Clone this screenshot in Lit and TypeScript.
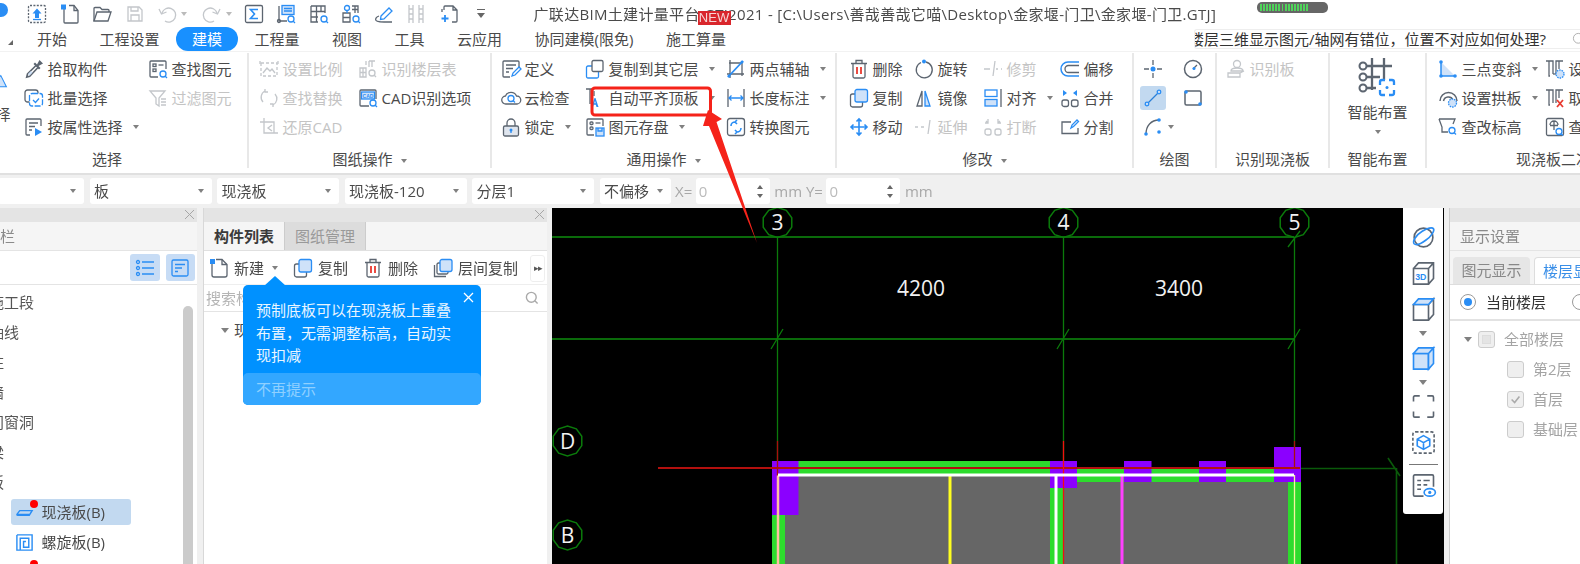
import { LitElement, html, css, svg, nothing } from "lit";
import { customElement } from "lit/decorators.js";

const I: Record<string, unknown> = {
  upload: svg`<rect x="1.5" y="1.5" width="17" height="17" rx="1.5" stroke-dasharray="2 1.4"/><path class="fb" d="M10 4.5l4.5 5H12v4.5H8V9.5H5.5z"/><path class="b" d="M6 15.5h8"/>`,
  newfile: svg`<path d="M4 3.5V18a1 1 0 001 1h12a1 1 0 001-1V6.500L14 1.500H9"/><path d="M14 1.500v5h4"/><rect class="fb" x="1" y="0.500" width="5" height="5"/>`,
  open: svg`<path d="M2 17V4.500a1 1 0 011-1h5l2 2h6a1 1 0 011 1V8"/><path d="M2 17l3-9h14l-3 9z"/>`,
  save: svg`<path d="M3 3h11l3 3v11H3z"/><path d="M6 3v4h7V3M6 17v-6h8v6"/>`,
  undo: svg`<path d="M5 9a7 7 0 1 1 3 8"/><path d="M2 5l2.500 5 5-2"/>`,
  redo: svg`<path d="M15 9a7 7 0 1 0-3 8"/><path d="M18 5l-2.500 5-5-2"/>`,
  sigma: svg`<rect x="1.500" y="1.500" width="17" height="17" rx="1.500"/><path class="b" stroke-width="1.600" d="M14 5.500H6.500l4 4.500-4 4.500H14"/>`,
  qty1: svg`<path d="M3 2v15h8"/><circle cx="3" cy="17" r="1.500"/><rect class="lb" x="6" y="1.500" width="12" height="9"/><path class="b" d="M8 4.500h8M8 7h8"/><circle class="b" cx="15" cy="15" r="3"/><path class="b" d="M17 17l2 2"/>`,
  qty2: svg`<path d="M2 2h14v7M2 2v16h7M2 7.500h14M2 13h7M7.500 2v16M12 2v6"/><circle class="b" cx="15" cy="15" r="3"/><path class="b" d="M17 17l2 2"/>`,
  qty3: svg`<path d="M11 2h6v7M2 9h7v9H2zM2 13.500h7M11 5.500h6M14 2v7"/><circle class="b" cx="6" cy="4" r="2.500"/><path class="b" d="M6 7v2"/><circle class="b" cx="15" cy="15" r="3"/><path class="b" d="M17 17l2 2"/>`,
  pen: svg`<path class="b" d="M7 12l8-8 3 3-8 8-3.500.5z"/><path d="M5 12c-3 1-4 3-3 4.500S6 18 18 18"/>`,
  ladder: svg`<path d="M3 1v18M7 1v18M13 1v18M17 1v18M3 5h4M3 10h4M3 15h4M13 5h4M13 10h4M13 15h4"/>`,
  crop: svg`<path d="M5 6V3a1 1 0 011-1h8l4 4v11a1 1 0 01-1 1h-4M8 2M14 2v4h4"/><path stroke-dasharray="3 2" d="M3 5v5"/><path class="b" stroke-width="1.800" d="M6 11v7M2.500 14.500h7"/>`,
  pick: svg`<path stroke-width="1.600" d="M12 6.500l-8.500 8.500-.8 3 3-.8L14 8.500"/><path class="fg" d="M11 3.500l2 2L15.500 1 19 4.500 14.500 7l2 2-1.500 1.500-5.500-5.500z"/><path class="lbn" d="M4 15l3-3 1.500 1.500-3 3z"/>`,
  batch: svg`<rect x="1" y="2" width="13" height="12" rx="2.500"/><rect class="lbw" x="5.500" y="5.500" width="13" height="12.500" rx="2.500" stroke-dasharray="6 1.500"/><path class="b" d="M9 12l2.500 2.500 3.500-4"/>`,
  attr: svg`<path d="M6 18H3a1 1 0 01-1-1V3a1 1 0 011-1h13a1 1 0 011 1v6"/><path d="M5 6h9M5 9.500h6M5 13h3"/><path class="fb" d="M11 11l7 4-7 4z"/>`,
  find: svg`<path d="M10 18H3a1 1 0 01-1-1V3a1 1 0 011-1h14a1 1 0 011 1v7"/><rect x="5" y="5" width="3" height="2.500"/><rect x="5" y="10" width="3" height="2.500"/><path d="M10.500 6h5"/><circle class="b" cx="15" cy="15" r="3"/><path class="b" d="M17 17l2 2"/>`,
  filter: svg`<path d="M2 3h15l-6 7v8l-3-2v-6z"/><path d="M13 11h5M13 14h5M13 17h5"/>`,
  scale: svg`<rect x="2" y="4" width="16" height="13" stroke-dasharray="3 2"/><path d="M1 2v3M19 2v3M4 14l4-5 3 3 2-2 3 4"/>`,
  floor: svg`<path d="M2 9h6v9H2zM2 13.500h6M5 9v9M11 2h6M11 2v6M14 2v6M8 2v4"/><circle cx="14" cy="14" r="3"/><path d="M16 16l2 2"/>`,
  replace: svg`<path d="M4 14a7 7 0 012-11M16 6a7 7 0 01-2 11"/><path d="M6 1v3h3M14 19v-3h-3"/>`,
  cad: svg`<path d="M11 18H3a1 1 0 01-1-1V3a1 1 0 011-1h14a1 1 0 011 1v8"/><rect class="lb" x="3.500" y="4" width="13" height="7"/><text x="10" y="9.500" class="tiny">CAD</text><circle class="b" cx="15" cy="15" r="3"/><path class="b" d="M17 17l2 2"/>`,
  restore: svg`<path d="M5 1v15h14M1 5h14v11"/><path d="M13 8l-4 3 4 3"/>`,
  define: svg`<path d="M9 18H3a1 1 0 01-1-1V3a1 1 0 011-1h14a1 1 0 011 1v6"/><path d="M5 6h10M5 9.500h7M5 13h3"/><path class="b" d="M11 17l1-3 6-6 2 2-6 6z"/>`,
  cloud: svg`<path d="M5 16a4 4 0 01-.5-8 6 6 0 0111 0 4 4 0 01.5 8z"/><circle class="b" cx="10" cy="10.500" r="3"/><path class="b" d="M12 12.500l2 2"/>`,
  lock: svg`<path d="M6 9V6a4 4 0 018 0v3"/><rect class="lg" x="2.500" y="9" width="15" height="10" rx="1.500"/><circle class="fb" cx="10" cy="13" r="1.500"/><path class="b" d="M10 13v3"/>`,
  copyTo: svg`<rect class="lbw" x="1.500" y="7" width="12" height="12" rx="1.500"/><rect class="wg" x="7" y="1.500" width="11" height="11" rx="1.500"/>`,
  autotop: svg`<path d="M1 1h7M5 1v15M9 3v5"/><path class="fb" d="M6.500 19l3-9h1l3 9h-2l-.7-2.200h-2.100l-.7 2.200zM9.300 15.300h1.400l-.7-2.500z"/>`,
  store: svg`<path d="M9 18H3a1 1 0 01-1-1V3a1 1 0 011-1h14a1 1 0 011 1v6"/><rect x="5" y="5" width="3" height="2.500" rx="1"/><rect x="5" y="10" width="3" height="2.500" rx="1"/><path d="M10.500 6h5"/><rect class="lb" x="11" y="11" width="8" height="8"/><path class="b" d="M13 11v3h4v-3"/>`,
  twopt: svg`<path d="M4 1v18M1 15h17M3 4h13v13"/><path class="b" stroke-width="1.800" d="M2 18L17 2"/><circle class="fb" cx="3" cy="17" r="1.500"/><circle class="fb" cx="16" cy="3" r="1.500"/>`,
  dim: svg`<path d="M2 1v18M18 1v18"/><path class="b" d="M3 10h14M5.500 7.500L3 10l2.500 2.500M14.500 7.500L17 10l-2.500 2.500"/>`,
  convert: svg`<rect x="1.500" y="1.500" width="17" height="17" rx="2.500"/><path class="b" stroke-width="1.600" d="M5 9a4 4 0 014-4h1M11 3l-2 2 2 2"/><path class="b" stroke-width="1.600" d="M15 11a4 4 0 01-4 4h-1M9 17l2-2-2-2"/>`,
  del: svg`<path d="M4 5v12.500a1.500 1.500 0 001.500 1.500h9a1.500 1.500 0 001.500-1.500V5M2 4.500h16M7 4.500V1.500h6v3"/><path class="r" stroke-width="1.800" d="M8 8v7M12 8v7"/>`,
  rotate: svg`<path d="M12 3a8 8 0 11-5 .5"/><circle class="fb" cx="10" cy="2.500" r="2"/>`,
  trim: svg`<path d="M1 10h6M13 10h2M18 10h1M10 17L12 2"/>`,
  copy: svg`<rect class="wg" x="1.500" y="6" width="12" height="13" rx="2"/><rect class="lb" x="6" y="1.500" width="12.500" height="12.500" rx="2"/>`,
  mirror: svg`<path d="M8 3L3 18h5z"/><path class="lb" d="M11 3l5 15h-5z"/>`,
  alignb: svg`<rect class="b" x="2" y="2" width="12" height="6.500"/><rect class="lb" x="2" y="11.500" width="12" height="6.500"/><path d="M18 1v18"/>`,
  move: svg`<path class="b" stroke-width="1.600" d="M10 3v14M3 10h14M7.500 4.500L10 2l2.500 2.500M7.500 15.500L10 18l2.500-2.500M4.500 7.500L2 10l2.500 2.500M15.500 7.500L18 10l-2.500 2.500"/>`,
  extend: svg`<path d="M1 10h3M7 10h3M14 17l2-14"/>`,
  brk: svg`<rect x="2" y="12" width="6" height="6" rx="2"/><rect x="12" y="12" width="6" height="6" rx="2"/><path d="M3 4l2 2M5 2v4H2M17 4l-2 2M15 2v4h3"/>`,
  offset: svg`<path class="b" stroke-width="1.500" d="M19 3H8a7 7 0 000 14h11"/><path d="M19 6.500H8.500a3.500 3.500 0 000 7H19"/>`,
  merge: svg`<rect x="2" y="12" width="6.500" height="6.500" rx="2"/><rect x="11.500" y="12" width="6.500" height="6.500" rx="2"/><path class="fb" d="M3 2l4 3-4 3zM17 2l-4 3 4 3z"/>`,
  split: svg`<path d="M18 11v5.500H2V5h9"/><path class="b" d="M11 11l1-3 5-5 1.500 1.500-5 5z"/>`,
  point: svg`<path d="M1 10h5M14 10h5M10 1v5M10 14v5"/><circle class="fb" cx="10" cy="10" r="2.500"/>`,
  gauge: svg`<circle cx="10" cy="10" r="8.500" stroke-width="1.500"/><path d="M10 10l4-4"/><circle class="fb" cx="11" cy="9.500" r="1.500"/>`,
  line: svg`<path class="nb" d="M4 16L16 4"/><circle class="lb" cx="4" cy="16" r="1.800"/><circle class="lb" cx="16" cy="4" r="1.800"/>`,
  rect: svg`<rect x="2" y="3" width="16" height="14" rx="1.500" stroke-width="1.500"/><circle class="fb" cx="3" cy="4" r="1.800"/><circle class="fb" cx="17" cy="16" r="1.800"/>`,
  arc: svg`<path d="M3 17C3 9 8 3 16 3"/><circle class="fb" cx="3" cy="17" r="1.800"/><circle class="fb" cx="16" cy="3" r="1.800"/><circle class="fb" cx="16" cy="15" r="1.800"/>`,
  recog: svg`<circle cx="11" cy="5" r="3.500"/><path d="M5 12c0-2 3-3 6-3s6 1 6 3zM2 14h12v4H2zM14 14l4-2"/>`,
  slope: svg`<path class="lbn" d="M3 3v14h14z"/><path class="b" stroke-width="1.500" d="M3 3v14h14"/><circle class="fb" cx="3" cy="3" r="1.800"/><circle class="fb" cx="3" cy="17" r="1.800"/><circle class="fb" cx="17" cy="17" r="1.800"/>`,
  arch: svg`<path stroke-width="1.500" d="M2 13a8.500 8.500 0 0117 0M5.500 13a5 5 0 019.500-1"/><circle class="lb" cx="14.500" cy="15" r="4" stroke-dasharray="1.500 1"/>`,
  elev: svg`<path d="M1 2h16l-2 5M1 2l3 8v5h6"/><circle class="b" cx="14" cy="13.500" r="3"/><path class="b" d="M16 15.500l2 2"/>`,
  setU: svg`<path d="M1 2h7v13M4 2v15h1M11 15V2h7M14 2v8"/><path d="M8 15l3 0"/><circle class="lb" cx="15" cy="15" r="4" stroke-dasharray="1.500 1"/>`,
  cancelU: svg`<path d="M1 2h7v13M4 2v15h1M11 15V2h7M14 2v8"/><path class="r" stroke-width="1.800" d="M12 12l6 7M18 12l-6 7"/>`,
  checkU: svg`<rect x="1.500" y="1.500" width="17" height="17" rx="1.500"/><path d="M5 8a4 4 0 018 0M9 4v9M5 8.500h8"/><circle class="b" cx="14" cy="14.500" r="3"/><path class="b" d="M16 16.500l2 2"/>`,
  listv: svg`<circle class="lb" cx="3" cy="4" r="1.500"/><circle class="lb" cx="3" cy="10" r="1.500"/><circle class="lb" cx="3" cy="16" r="1.500"/><path class="b" d="M7 4h12M7 10h12M7 16h12"/>`,
  detailv: svg`<rect class="b" x="2" y="2" width="16" height="16" rx="1.500"/><path class="b" d="M5 6.500h10M5 10h7M5 13.500h3"/>`,
  newp: svg`<path d="M3 5v12a2 2 0 002 2h11a2 2 0 002-2V6.500L13 1.500H7"/><path d="M13 1.500v5h5"/><rect class="fb" x="1" y="1" width="5" height="5"/>`,
  lvlcopy: svg`<path d="M1.500 7v11.500H13"/><rect class="wg" x="4" y="5" width="11" height="11" rx="1.500"/><rect class="lb" x="7" y="1.500" width="12" height="12" rx="2"/>`,
  slab: svg`<path class="b" stroke-width="1.500" d="M2 12l3-4h13l-3 5H3a1 1 0 01-1-1zM15 13v0M2 12h13"/>`,
  spiral: svg`<path class="b" stroke-width="1.500" d="M2 2h16v16H2V2M5.500 18V5.500h9V15H9V9h2.500"/>`,
  globe: svg`<circle cx="10" cy="10" r="7.500"/><path class="b" stroke-width="1.300" d="M2.500 15C1 13 4 8 9 5c4-2.500 8-3.500 9-2s-1.500 6-6 9c-4 3-8 4.500-9.500 3z"/>`,
  cube3d: svg`<path d="M2 6h12v12.500H2zM2 6l4-4.500h12V14l-4 4.500M14 6l4-4.500"/><text x="3.300" y="15.500" class="tiny3">3D</text>`,
  cubeTop: svg`<path d="M2 6h12v12.500H2zM14 18.500l4-4.500V1.500L14 6"/><path class="lb" d="M2 6l4-4.500h12L14 6z"/>`,
  cubeFull: svg`<path class="lb" d="M2 6h12v12.500H2z"/><path class="lb" d="M14 18.500l4-4.500V1.500L14 6zM2 6l4-4.500h12L14 6z"/>`,
  corners: svg`<path d="M2 6V2.500a1 1 0 011-1h4M13 1.500h4a1 1 0 011 1V6M2 14v3.500a1 1 0 001 1h4M13 18.500h4a1 1 0 001-1V14"/>`,
  dashcube: svg`<rect x="1.500" y="1.500" width="17" height="17" rx="2" stroke-dasharray="2.500 1.500"/><path class="b" d="M10 4.500l5 2.800v5.400l-5 2.800-5-2.800V7.300zM5 7.300l5 2.800 5-2.800M10 10v5.500"/>`,
  listeye: svg`<path d="M10 18.500H3a1 1 0 01-1-1V2.500a1 1 0 011-1h14a1 1 0 011 1V11"/><path d="M5 6h3M10 6h5M5 9.500h3M10 9.500h3M5 13h3"/><ellipse class="b" cx="15" cy="15.500" rx="4.500" ry="3"/><circle class="fb" cx="15" cy="15.500" r="1.300"/>`,
  arrowsel: svg`<path class="lb" d="M16 2L3 16h20z"/>`,
  smart: svg`<path stroke-width="2.300" d="M14 0v32M26 0v22M4 8h30M8 19h14M8 30h10"/><circle class="wh" cx="5" cy="8" r="3.500" stroke-width="2"/><circle class="wh" cx="5" cy="19" r="3.500" stroke-width="2"/><circle class="wh" cx="5" cy="30" r="3.500" stroke-width="2"/><path class="b" stroke-width="2.300" d="M22 27v-3a2 2 0 012-2h3M31 22h3a2 2 0 012 2v3M36 32v3a2 2 0 01-2 2h-3M27 37h-3a2 2 0 01-2-2v-3"/><circle class="fb" cx="29" cy="29.500" r="1.500"/>`,
};

const icon = (n: string) =>
  html`<svg class="ic" viewBox="0 0 20 20">${I[n]}</svg>`;

type Opt = { caret?: boolean; off?: boolean };
const item = (ic: string, label: string, o: Opt = {}) =>
  html`<div class="item ${o.off ? "off" : ""}">
    ${icon(ic)}<span>${label}</span>${o.caret ? html`<i class="caret"></i>` : nothing}
  </div>`;

const col = (w: number | null, ...items: unknown[]) =>
  html`<div class="col" style=${w ? `width:${w}px` : ""}>${items}</div>`;

const group = (cls: string, label: string, body: unknown, caret = false) =>
  html`<section class="group ${cls}">
    <div class="cols">${body}</div>
    <div class="glabel">${label}${caret ? html`<i class="caret"></i>` : nothing}</div>
  </section>`;

const bubble = (cx: number, cy: number, t: string) => {
  const pts = Array.from({ length: 10 }, (_, k) => {
    const a = (k / 10) * Math.PI * 2 + Math.PI / 10;
    return `${cx + 15 * Math.cos(a)},${cy + 15 * Math.sin(a)}`;
  }).join(" ");
  return svg`<polygon points=${pts} fill="none" stroke="#0b7a0b" stroke-width="1.500"/>
    <text x=${cx} y=${cy + 7.500} class="cadt" text-anchor="middle">${t}</text>`;
};

const TITLE =
  "广联达BIM土建计量平台 GTJ2021 - [C:\\Users\\善哉善哉它喵\\Desktop\\金家堰-门卫\\金家堰-门卫.GTJ]";

@customElement("app-root")
export class AppRoot extends LitElement {
  static styles = css`
    :host {
      display: block;
      position: relative;
      width: 1580px;
      height: 564px;
      overflow: hidden;
      background: #f0f0f0;
      font: 15px/20px "Open Sans", "Noto Sans CJK SC", "Liberation Sans", sans-serif;
      color: #4a4a4a;
    }
    .blur { filter: blur(0.3px); height: 100%; }
    .ic { width: 20px; height: 20px; flex: none; fill: none; stroke: #5c6570; stroke-width: 1.3; overflow: visible; }
    .ic .b, .smart .b { stroke: #2a8df4; fill: none; }
    .ic .nb { stroke: #2a7fd8; }
    .ic .fb, .smart .fb { fill: #2a8df4; stroke: none; }
    .ic .lb { fill: #cfe2f9; stroke: #2a8df4; }
    .ic .lbn { fill: #cfe2f9; stroke: none; }
    .ic .lbw { fill: #fff; stroke: #2a8df4; }
    .ic .wg { fill: #fff; }
    .ic .lg { fill: #dfe5ee; }
    .ic .fg { fill: #5c6570; stroke: none; }
    .ic .r { stroke: #e8392f; }
    .ic .tiny { font: 700 5px "Liberation Sans", sans-serif; fill: #2a8df4; stroke: none; text-anchor: middle; }
    .ic .tiny3 { font: 700 7px "Liberation Sans", sans-serif; fill: #2a8df4; stroke: none; }
    .off .ic { opacity: 0.36; }

    .titlebar { height: 27px; display: flex; align-items: center; position: relative; background: #fff; }
    .logo { width: 8px; height: 14px; background: #2a8df4; border-radius: 0 7px 7px 0; flex: none; margin-right: 13px; margin-top: -7px; }
    .qa { width: 32.500px; flex: none; display: flex; justify-content: center; align-items: center; }
    .qa.und { width: 45px; justify-content: flex-start; padding-left: 6px; box-sizing: border-box; gap: 4px; }
    .qa.red { width: 41.500px; justify-content: flex-start; padding-left: 6px; box-sizing: border-box; gap: 4px; }
    .qa.off .caret { border-top-color: #bbb; margin: 0; }
    .more { width: 8px; height: 8px; border-top: 1px solid #666; position: relative; }
    .more::after { content: ""; position: absolute; left: 0; top: 3px; border: 4px solid transparent; border-top: 5px solid #666; border-bottom: 0; }
    .title { margin-left: 36px; white-space: pre; color: #4a4a4a; position: relative; letter-spacing: 0.32px; }
    .new { position: absolute; left: 164px; top: 7px; width: 33px; height: 14px; background: #d9262c; color: #f6d5d5; font: 13px/14px "Liberation Sans", sans-serif; text-align: center; letter-spacing: 0; }
    .pill { margin-left: auto; margin-right: 252px; width: 71px; height: 11px; border-radius: 5px; background: #666; flex: none; display: flex; gap: 1.200px; padding: 2px 3px; box-sizing: border-box; margin-top: -12px; }
    .pill b { width: 1.900px; background: #4fd45a; flex: none; }

    .tabs { height: 24px; display: flex; align-items: center; padding-left: 20.750px; background: #fff; position: relative; }
    .tabs .corner { position: absolute; left: 8px; top: 13px; border-left: 5px solid transparent; border-bottom: 5px solid #666; }
    .tab { padding: 0 16.250px; height: 24px; line-height: 24px; white-space: nowrap; }
    .tab.on { background: #1890ff; color: #fff; border-radius: 12px; }
    .ask { margin-left: auto; width: 386px; height: 20px; background: #fff; border: 1px solid #eee; border-right: 0; border-radius: 3px 0 0 3px; box-sizing: border-box; display: flex; align-items: center; overflow: hidden; color: #333; position: relative; line-height: 20px; white-space: nowrap; flex: none; }
    .ask span { margin-left: -6px; }
    .ask .ic { position: absolute; right: -6px; top: 2px; width: 14px; height: 14px; stroke: #aaa; }

    .ribbon { height: 124px; display: flex; background: #fff; overflow: hidden; border-top: 1px solid #f2f2f2; border-bottom: 2px solid #e0e0e0; box-sizing: border-box; padding-top: 1px; padding-bottom: 5px; }
    .group { flex: none; display: flex; flex-direction: column; border-right: 2px solid #e8e8e8; box-sizing: border-box; }
    .cols { flex: none; height: 96px; box-sizing: border-box; display: flex; padding-top: 1px; }
    .col { display: flex; flex-direction: column; flex: none; }
    .item { height: 29px; display: flex; align-items: center; gap: 3.500px; white-space: nowrap; }
    .item.off span { color: #c4c4c4; }
    .caret { display: inline-block; flex: none; width: 0; height: 0; border: 3.500px solid transparent; border-top: 4px solid #808080; border-bottom: 0; margin-left: 7px; }
    .glabel { text-align: center; line-height: 20px; white-space: nowrap; }
    .glabel .caret { margin-left: 8px; vertical-align: 2px; }
    .g1 { width: 282px; margin-left: -33px; }
    .g2 { width: 243px; } .g2 .cols { padding-left: 10px; }
    .g3 { width: 345px; } .g3 .cols { padding-left: 9px; }
    .g4 { width: 297px; } .g4 .cols { padding-left: 12px; }
    .g5 { width: 83px; } .g5 .cols { padding-left: 6px; }
    .g6 { width: 113px; } .g6 .cols { padding-left: 9px; }
    .g7 { width: 97px; }
    .g8 { width: 283px; border-right: 0; } .g8 .cols { padding-left: 11px; }
    .big { width: 57px; display: flex; flex-direction: column; align-items: center; padding-top: 20px; box-sizing: border-box; }
    .big .ic { width: 16px; height: 16px; margin-bottom: 14px; }
    .tool { width: 26px; height: 24px; margin: 2.500px 14px 2.500px 0; display: flex; align-items: center; justify-content: center; border-radius: 3px; }
    .tool.on { background: #c2d9f0; }
    .tool.end { margin-right: 0; }
    .tool.wide { width: 40px; margin-right: 0; justify-content: flex-start; padding-left: 3px; box-sizing: border-box; }
    .tool .caret { margin-left: 5px; }
    .smart { display: flex; flex-direction: column; align-items: center; width: 95px; padding-top: 4px; }
    .smart svg { width: 40px; height: 42px; fill: none; stroke: #5c6570; }
    .smart .wh { fill: #fff; }
    .smart .lbl { margin-top: 2px; }
    .smart .caret { margin: 8px 0 0; }

    .bar { height: 32px; display: flex; align-items: center; padding-top: 0; gap: 5.500px; margin-left: -2px; }
    .sel { height: 26px; background: #fff; border-radius: 3px; box-sizing: border-box; display: flex; align-items: center; padding: 0 8px 0 4.500px; justify-content: space-between; flex: none; }
    .sel .caret { margin: 0; }
    .lab { color: #a8a8a8; margin: 0 -2px 0 -1px; white-space: nowrap; }
    .num { width: 74px; height: 26px; background: #fff; border-radius: 3px; color: #bbb; display: flex; align-items: center; justify-content: space-between; padding: 0 7px 0 3px; box-sizing: border-box; flex: none; }
    .spin { display: flex; flex-direction: column; gap: 5px; }
    .spin i { width: 0; height: 0; border: 3px solid transparent; }
    .spin i:first-child { border-bottom: 4px solid #666; border-top: 0; }
    .spin i:last-child { border-top: 4px solid #666; border-bottom: 0; }

    .main { height: 357px; display: flex; overflow: hidden; }
    .panel { flex: none; background: #fff; margin-top: 1px; position: relative; overflow: hidden; }
    .phead { height: 14px; background: #e4e4e4; position: relative; }
    .x { position: absolute; right: 2px; top: 1px; width: 11px; height: 11px; stroke: #a6a6a6; fill: none; }
    .left { width: 197px; margin-right: 6px; }
    .psub { height: 28px; line-height: 28px; background: #f5f5f5; border-bottom: 1px solid #e4e4e4; color: #8a8a8a; white-space: nowrap; }
    .psub span { margin-left: -30px; }
    .ltool { height: 34px; border-bottom: 1px solid #e4e4e4; display: flex; justify-content: flex-end; align-items: center; gap: 6px; padding-right: 2px; box-sizing: border-box; }
    .vbtn { width: 29.500px; height: 27px; border-radius: 3px; background: #c7dcf5; display: flex; align-items: center; justify-content: center; }
    .tree { padding-top: 2px; }
    .row { height: 30px; line-height: 30px; margin-left: -11px; white-space: nowrap; color: #555; }
    .child { height: 30px; display: flex; align-items: center; margin-left: 10.500px; width: 120.500px; }
    .child .chip { height: 26px; width: 100%; display: flex; align-items: center; padding-left: 4px; gap: 8px; box-sizing: border-box; border-radius: 3px; position: relative; white-space: nowrap; }
    .chip.on { background: #c2d9f0; }
    .dot { position: absolute; left: 19px; top: 1px; width: 8px; height: 8px; background: #f00; border-radius: 50%; }
    .chip .ic { width: 19px; height: 19px; }
    .scroll { position: absolute; left: 183px; top: 98px; width: 10px; height: 300px; border-radius: 5px; background: #cbcbcb; }

    .mid { width: 344px; margin-right: 5px; border-left: 1px solid #d8d8d8; box-sizing: border-box; overflow: visible; }
    .mtabs { height: 28px; display: flex; background: #f5f5f5; border-bottom: 1px solid #e0e0e0; }
    .mtab { width: 81px; height: 28px; line-height: 28px; text-align: center; background: #dcdcdc; color: #999; border-right: 1px solid #ccc; box-sizing: border-box; }
    .mtab.on { background: #f5f5f5; color: #3a3a3a; font-weight: 700; }
    .mtool { height: 34px; display: flex; align-items: center; padding-left: 5px; gap: 15px; border-bottom: 1px solid #eee; box-sizing: border-box; position: relative; }
    .mi { display: flex; align-items: center; gap: 5px; white-space: nowrap; }
    .mi .caret { margin-left: 3px; }
    .ff { position: absolute; right: 2px; top: 4px; width: 13px; height: 25px; border: 1px solid #eee; border-radius: 3px; font: 9px/25px "Liberation Sans", sans-serif; text-align: center; letter-spacing: -1px; color: #555; }
    .msearch { height: 26px; line-height: 26px; padding-left: 2px; color: #b5b5b5; border-bottom: 1px solid #e4e4e4; position: relative; }
    .msearch .ic { position: absolute; right: 8px; top: 6px; width: 14px; height: 14px; stroke: #aaa; stroke-width: 2; }
    .mtree { display: flex; align-items: center; height: 36px; padding-left: 17px; gap: 5px; }
    .tri { width: 0; height: 0; border: 4px solid transparent; border-top: 5px solid #808080; border-bottom: 0; flex: none; }
    .tip { position: absolute; left: 39px; top: 77px; width: 238px; height: 120px; background: #0091ff; border-radius: 5px; color: #e9f5ff; z-index: 3; display: flex; flex-direction: column; }
    .tip::before { content: ""; position: absolute; left: 21px; top: -9px; border: 11px solid transparent; border-top: 0; border-bottom: 10px solid #0091ff; }
    .tip .msg { flex: 1; padding: 14px 29px 0 13px; line-height: 22.500px; }
    .tip .no { height: 32px; line-height: 32px; background: #33a7ff; color: #8fd0ff; padding-left: 13px; border-radius: 5px; }
    .tip svg { position: absolute; right: 7px; top: 7px; width: 11px; height: 11px; stroke: #fff; fill: none; stroke-width: 1.300; }

    .canvas { width: 892px; margin-right: 5px; background: #000; position: relative; flex: none; margin-top: 1px; overflow: hidden; }
    .canvas > svg { display: block; width: 892px; height: 356px; }
    .cadt { font: 21px "Open Sans", sans-serif; fill: #f2f2f2; }
    .strip { position: absolute; left: 851px; top: 0; width: 40px; height: 306px; background: #fff; border-radius: 0 0 3px 3px; display: flex; flex-direction: column; align-items: center; padding-top: 11px; box-sizing: border-box; }
    .sc { height: 36px; display: flex; align-items: center; justify-content: center; flex: none; }
    .sc .ic { width: 25px; height: 25px; }
    .sc.h38 { height: 38px; }
    .sc.car { height: 12px; }
    .sc.car2 { height: 10px; margin-bottom: 1px; }
    .sc.rule { height: 8px; width: 29px; }
    .sc.rule::after { content: ""; display: block; height: 1px; width: 100%; background: #777; }
    .sc.h34 { height: 34px; }
    .right { flex: 1; border-left: 1px solid #ccc; box-sizing: border-box; }
    .rsub { height: 28px; line-height: 28px; background: #f5f5f5; padding-left: 10px; color: #8a8a8a; border-bottom: 1px solid #e4e4e4; }
    .rtabs { height: 33px; display: flex; align-items: flex-end; padding-left: 3px; gap: 4px; border-bottom: 1px solid #ddd; background: #f5f5f5; white-space: nowrap; }
    .rtab { width: 77px; height: 27px; line-height: 27px; text-align: center; background: #e6e6e6; color: #888; border-radius: 4px 4px 0 0; flex: none; }
    .rtab.on { background: #fff; color: #3a8fe8; border: 1px solid #ddd; border-bottom: 0; box-sizing: border-box; width: 90px; padding-left: 8px; text-align: left; }
    .rradio { height: 36px; display: flex; align-items: center; padding-left: 10px; border-bottom: 2px solid #e2e2e2; box-sizing: border-box; white-space: nowrap; color: #333; }
    .radio { width: 16px; height: 16px; border: 1px solid #999; border-radius: 50%; box-sizing: border-box; display: flex; align-items: center; justify-content: center; flex: none; }
    .radio.on::after { content: ""; width: 8px; height: 8px; border-radius: 50%; background: #2a8df4; }
    .radio.two { margin-left: 26px; }
    .rlab { margin-left: 10px; }
    .rtree { padding-top: 3px; }
    .rrow { height: 30px; display: flex; align-items: center; color: #a4a4a4; gap: 9px; }
    .rrow.top { padding-left: 14px; gap: 6px; }
    .rrow.sub { padding-left: 57px; }
    .rrow.top > span { margin-left: 3px; }
    .chk { width: 17px; height: 17px; background: #efefef; border: 1px solid #ccc; border-radius: 3px; box-sizing: border-box; position: relative; flex: none; }
    .chk.part::after { content: ""; position: absolute; left: 3px; top: 3px; width: 9px; height: 9px; background: #e4e4e4; border: 1px solid #ddd; box-sizing: border-box; }
    .chk svg { position: absolute; inset: 1px; stroke: #aaa; fill: none; stroke-width: 1.800; }

    .mark { position: absolute; left: 0; top: 0; width: 1580px; height: 564px; pointer-events: none; z-index: 5; }
  `;

  render() {
    const qas = ["upload", "newfile", "open"];
    const sx = html`<svg viewBox="0 0 11 11"><path d="M1 1l9 9M10 1l-9 9"/></svg>`;
    return html`<div class="blur">
      <header class="titlebar">
        <div class="logo"></div>
        ${qas.map((n) => html`<div class="qa">${icon(n)}</div>`)}
        <div class="qa off">${icon("save")}</div>
        <div class="qa und off">${icon("undo")}<i class="caret"></i></div>
        <div class="qa red off">${icon("redo")}<i class="caret"></i></div>
        ${["sigma", "qty1", "qty2", "qty3", "pen"].map((n) => html`<div class="qa">${icon(n)}</div>`)}
        <div class="qa off">${icon("ladder")}</div>
        <div class="qa">${icon("crop")}</div>
        <div class="qa"><div class="more"></div></div>
        <div class="title">${TITLE}<div class="new">NEW</div></div>
        <div class="pill">${Array.from({ length: 16 }, () => html`<b></b>`)}</div>
      </header>

      <nav class="tabs">
        <i class="corner"></i>
        ${["开始", "工程设置", "建模", "工程量", "视图", "工具", "云应用", "协同建模(限免)", "施工算量"].map(
          (t) => html`<div class="tab ${t === "建模" ? "on" : ""}">${t}</div>`
        )}
        <div class="ask">
          <span>楼层三维显示图元/轴网有错位，位置不对应如何处理?</span>
          <svg class="ic" viewBox="0 0 20 20"><circle cx="9" cy="9" r="7"/><path d="M14 14l4 4"/></svg>
        </div>
      </nav>

      <div class="ribbon">
        ${group("g1", "选择", html`
          <div class="col big">${icon("arrowsel")}<span>选择</span></div>
          ${col(124, item("pick", "拾取构件"), item("batch", "批量选择"), item("attr", "按属性选择", { caret: true }))}
          ${col(null, item("find", "查找图元"), item("filter", "过滤图元", { off: true }))}
        `)}
        ${group("g2", "图纸操作", html`
          ${col(99, item("scale", "设置比例", { off: true }), item("replace", "查找替换", { off: true }), item("restore", "还原CAD", { off: true }))}
          ${col(null, item("floor", "识别楼层表", { off: true }), item("cad", "CAD识别选项"))}
        `, true)}
        ${group("g3", "通用操作", html`
          ${col(84, item("define", "定义"), item("cloud", "云检查"), item("lock", "锁定", { caret: true }))}
          ${col(141, item("copyTo", "复制到其它层", { caret: true }), item("autotop", "自动平齐顶板", { caret: true }), item("store", "图元存盘", { caret: true }))}
          ${col(null, item("twopt", "两点辅轴", { caret: true }), item("dim", "长度标注", { caret: true }), item("convert", "转换图元"))}
        `, true)}
        ${group("g4", "修改", html`
          ${col(65, item("del", "删除"), item("copy", "复制"), item("move", "移动"))}
          ${col(69, item("rotate", "旋转"), item("mirror", "镜像"), item("extend", "延伸", { off: true }))}
          ${col(77, item("trim", "修剪", { off: true }), item("alignb", "对齐", { caret: true }), item("brk", "打断", { off: true }))}
          ${col(null, item("offset", "偏移"), item("merge", "合并"), item("split", "分割"))}
        `, true)}
        ${group("g5", "绘图", html`
          <div class="col">
            <div class="tool">${icon("point")}</div>
            <div class="tool on">${icon("line")}</div>
            <div class="tool wide">${icon("arc")}<i class="caret"></i></div>
          </div>
          <div class="col">
            <div class="tool end">${icon("gauge")}</div>
            <div class="tool end">${icon("rect")}</div>
          </div>
        `)}
        ${group("g6", "识别现浇板", html`${col(null, item("recog", "识别板", { off: true }))}`)}
        ${group("g7", "智能布置", html`
          <div class="smart">
            <svg viewBox="0 0 40 42">${I.smart}</svg>
            <div class="lbl">智能布置</div>
            <i class="caret"></i>
          </div>
        `)}
        ${group("g8", "现浇板二次编辑", html`
          ${col(107, item("slope", "三点变斜", { caret: true }), item("arch", "设置拱板", { caret: true }), item("elev", "查改标高"))}
          ${col(null, item("setU", "设置升降板"), item("cancelU", "取消升降板"), item("checkU", "查看板内钢筋"))}
        `)}
      </div>

      <div class="bar">
        <div class="sel" style="width:86px"><span></span><i class="caret"></i></div>
        <div class="sel" style="width:122px">板<i class="caret"></i></div>
        <div class="sel" style="width:122px">现浇板<i class="caret"></i></div>
        <div class="sel" style="width:122px">现浇板-120<i class="caret"></i></div>
        <div class="sel" style="width:122px">分层1<i class="caret"></i></div>
        <div class="sel" style="width:71px">不偏移<i class="caret"></i></div>
        <span class="lab">X=</span>
        <div class="num">0<div class="spin"><i></i><i></i></div></div>
        <span class="lab">mm Y=</span>
        <div class="num">0<div class="spin"><i></i><i></i></div></div>
        <span class="lab">mm</span>
      </div>

      <main class="main">
        <section class="panel left">
          <div class="phead"><svg class="x" viewBox="0 0 11 11"><path d="M1 1l9 9M10 1l-9 9"/></svg></div>
          <div class="psub"><span>导航栏</span></div>
          <div class="ltool">
            <div class="vbtn">${icon("listv")}</div>
            <div class="vbtn">${icon("detailv")}</div>
          </div>
          <div class="tree">
            ${["施工段", "轴线", "柱", "墙", "门窗洞", "梁", "板"].map((t) => html`<div class="row">${t}</div>`)}
            <div class="child"><div class="chip on">${icon("slab")}<i class="dot"></i>现浇板(B)</div></div>
            <div class="child"><div class="chip">${icon("spiral")}螺旋板(B)</div></div>
            <div class="child"><div class="chip"><i class="dot"></i></div></div>
          </div>
          <div class="scroll"></div>
        </section>

        <section class="panel mid">
          <div class="phead"><svg class="x" viewBox="0 0 11 11"><path d="M1 1l9 9M10 1l-9 9"/></svg></div>
          <div class="mtabs">
            <div class="mtab on">构件列表</div>
            <div class="mtab">图纸管理</div>
          </div>
          <div class="mtool">
            <div class="mi">${icon("newp")}新建<i class="caret"></i></div>
            <div class="mi">${icon("copy")}复制</div>
            <div class="mi">${icon("del")}删除</div>
            <div class="mi">${icon("lvlcopy")}层间复制</div>
            <div class="ff">▸▸</div>
          </div>
          <div class="msearch">搜索构件...
            <svg class="ic" viewBox="0 0 20 20"><circle cx="9" cy="9" r="7"/><path d="M14 14l4 4"/></svg>
          </div>
          <div class="mtree"><i class="tri"></i>现浇板</div>
          <div class="tip">
            ${sx}
            <div class="msg">预制底板可以在现浇板上重叠布置，无需调整标高，自动实现扣减</div>
            <div class="no">不再提示</div>
          </div>
        </section>

        <section class="canvas">
          <svg viewBox="552 208 892 356">
            <g fill="none" stroke="#0b7a0b" stroke-width="1.300">
              <path d="M777.500 237v240M1063.500 237v330M1294.500 237v240" />
              <path d="M552 237h742M552 339h742" stroke="#0a6a0a" stroke-width="2" />
              <path d="M771 349l12-20M1057 349l12-20M1288 349l12-20M1288 247l12-16" />
              <path d="M1301 468.500h95M1396.500 468v100M1388 458l12 18" stroke="#0a5a0a" stroke-width="1.600" />
            </g>
            ${bubble(777.500, 222.500, "3")}${bubble(1063.500, 222.500, "4")}${bubble(1294.500, 222.500, "5")}
            ${bubble(567.500, 441, "D")}${bubble(567.500, 535, "B")}
            <text x="921" y="296" class="cadt" text-anchor="middle">4200</text>
            <text x="1179" y="296" class="cadt" text-anchor="middle">3400</text>

            <rect x="772" y="473" width="529" height="91" fill="#666" />
            <rect x="772" y="461" width="278" height="14" fill="#2ddc2d" />
            <rect x="1050" y="468" width="251" height="14" fill="#2ddc2d" />
            <rect x="772" y="515" width="13" height="49" fill="#2ddc2d" />
            <rect x="1050" y="488" width="13" height="76" fill="#2ddc2d" />
            <rect x="1288" y="482" width="13" height="82" fill="#2ddc2d" />
            <g fill="#8b00ff">
              <rect x="772" y="461" width="26.500" height="54" />
              <rect x="1050" y="461" width="27" height="27" />
              <rect x="1124" y="461" width="27.500" height="21" />
              <rect x="1199" y="461" width="27" height="21" />
              <rect x="1274" y="447" width="27" height="35" />
            </g>
            <path d="M658 468h642" stroke="#b3100e" stroke-width="2" />
            <path d="M777.500 441v36M1294.500 441v26" stroke="#a80f0f" stroke-width="1.300" />
            <path d="M1063.500 441v123" stroke="#f01010" stroke-width="1.300" />
            <path d="M778 475.500v89" stroke="#ffc0a0" stroke-width="2.500" />
            <path d="M1056 475v89" stroke="#fff" stroke-width="3" />
            <path d="M1294.500 475v89" stroke="#f4f4a0" stroke-width="1.300" />
            <path d="M950 476v88" stroke="#ffff20" stroke-width="3" />
            <path d="M1122 475v89" stroke="#ff40ff" stroke-width="3" />
            <path d="M778 475h516" stroke="#fff" stroke-width="3" />
          </svg>
          <aside class="strip">
            <div class="sc">${icon("globe")}</div>
            <div class="sc">${icon("cube3d")}</div>
            <div class="sc">${icon("cubeTop")}</div>
            <div class="sc car"><i class="tri"></i></div>
            <div class="sc h38">${icon("cubeFull")}</div>
            <div class="sc car2"><i class="tri"></i></div>
            <div class="sc">${icon("corners")}</div>
            <div class="sc">${icon("dashcube")}</div>
            <div class="sc rule"></div>
            <div class="sc h34">${icon("listeye")}</div>
          </aside>
        </section>

        <section class="panel right">
          <div class="phead"></div>
          <div class="rsub">显示设置</div>
          <div class="rtabs">
            <div class="rtab">图元显示</div>
            <div class="rtab on">楼层显示</div>
          </div>
          <div class="rradio">
            <i class="radio on"></i><span class="rlab">当前楼层</span><i class="radio two"></i>
          </div>
          <div class="rtree">
            <div class="rrow top"><i class="tri"></i><i class="chk part"></i><span>全部楼层</span></div>
            <div class="rrow sub"><i class="chk"></i>第2层</div>
            <div class="rrow sub"><i class="chk"><svg viewBox="0 0 15 15"><path d="M3 7.500l3.500 3.500L12 4"/></svg></i>首层</div>
            <div class="rrow sub"><i class="chk"></i>基础层</div>
          </div>
        </section>
      </main>
      </div>

      <svg class="mark" viewBox="0 0 1580 564">
        <rect x="592" y="88" width="118.500" height="27" rx="3" fill="none" stroke="#f5231a" stroke-width="3" />
        <polygon points="708,110 722,119 716.500,122 757,243 709,126 703,126" fill="#f5231a" />
      </svg>`;
  }
}
